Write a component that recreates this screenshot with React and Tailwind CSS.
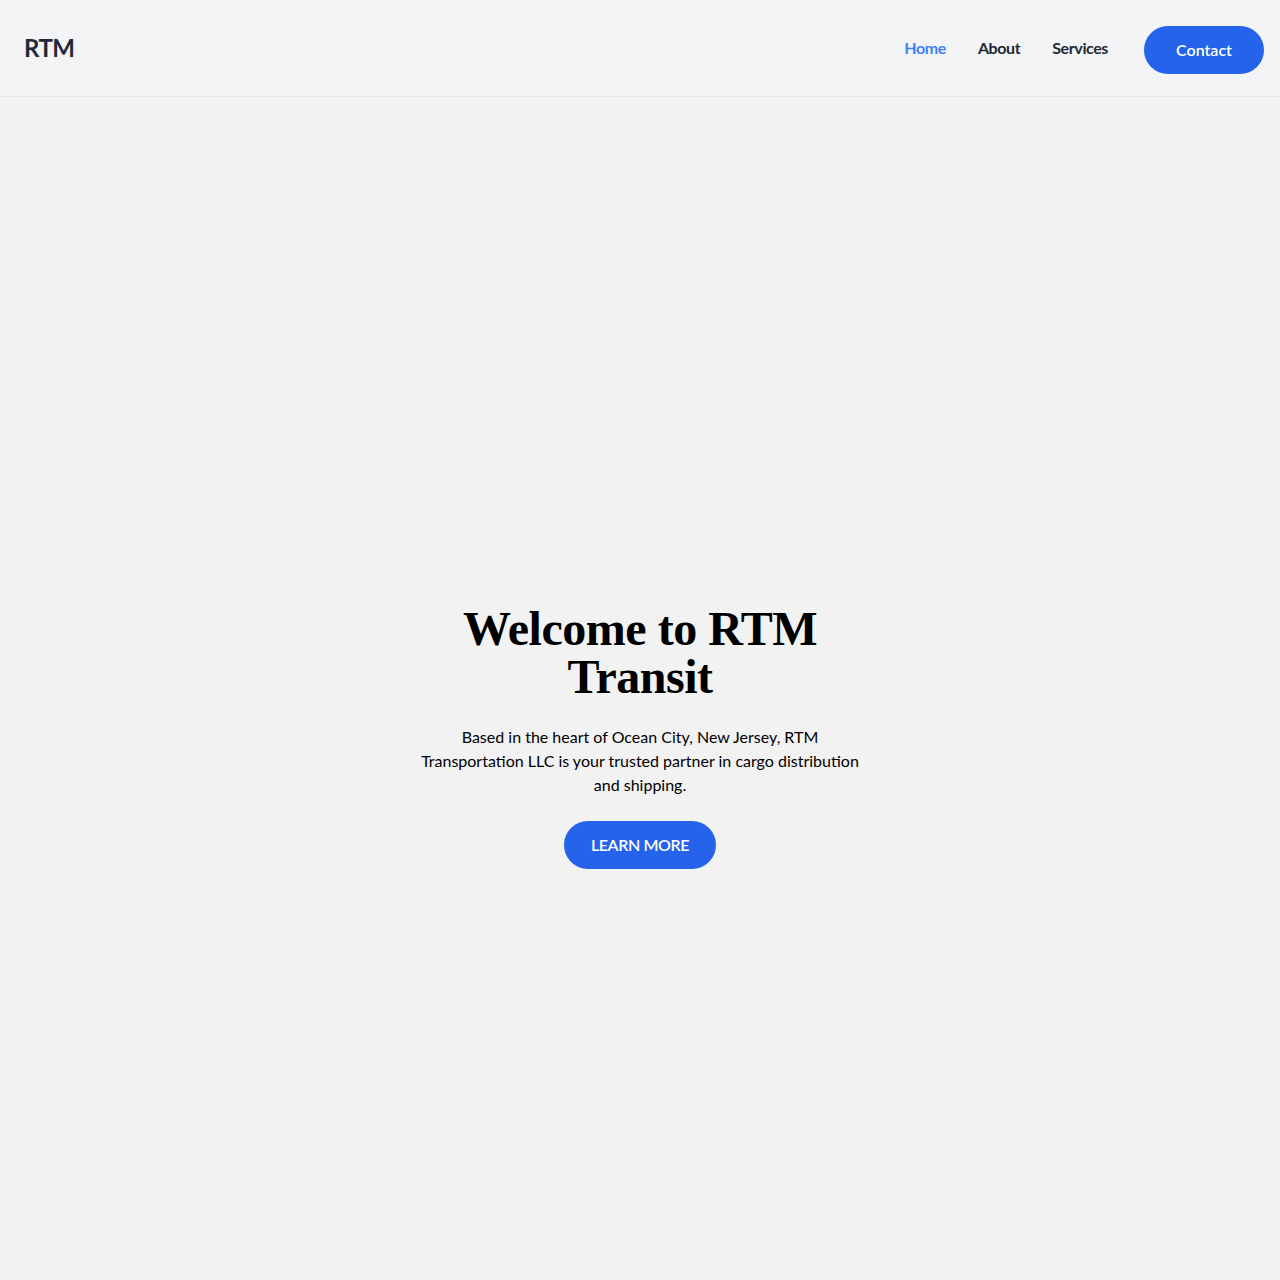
const App = () => {
  return (
    <div className="min-h-screen bg-[#f2f2f2] font-['Lato',sans-serif]">
      <header className="h-[97px] bg-[#f3f4f6] border-b border-[#e5e7eb] flex items-center justify-between pl-6 pr-4">
        <div className="text-2xl font-bold text-[#1f2937] tracking-tight">RTM</div>
        <nav className="flex items-center">
          <ul className="flex items-center gap-8 mr-9">
            <li><a href="#" className="text-base font-bold text-[#3b82f6] tracking-tight">Home</a></li>
            <li><a href="#" className="text-base font-bold text-[#1f2937] tracking-tight">About</a></li>
            <li><a href="#" className="text-base font-bold text-[#1f2937] tracking-tight">Services</a></li>
          </ul>
          <button className="w-[120px] h-12 mt-1 rounded-full bg-[#2563eb] text-white text-base font-semibold">
            Contact
          </button>
        </nav>
      </header>
      <main className="h-[1280px] flex items-center justify-center">
        <div className="w-[448px] flex flex-col items-center text-center">
          <h1 className="text-5xl leading-[48px] font-bold text-black font-['Liberation_Serif',serif] tracking-[-0.01em]">
            Welcome to RTM Transit
          </h1>
          <p className="mt-6 text-base leading-6 text-black">
            Based in the heart of Ocean City, New Jersey, RTM Transportation LLC is your trusted partner in cargo distribution and shipping.
          </p>
          <button className="mt-6 h-12 w-[152px] rounded-full bg-[#2563eb] text-white text-base font-semibold tracking-tight">
            LEARN MORE
          </button>
        </div>
      </main>
    </div>
  )
}

export default App
